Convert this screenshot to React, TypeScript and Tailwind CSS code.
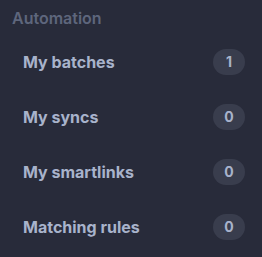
const items = [
  { label: "My batches", count: 1 },
  { label: "My syncs", count: 0 },
  { label: "My smartlinks", count: 0 },
  { label: "Matching rules", count: 0 },
];

export default function App() {
  return (
    <div className="h-[257px] w-[262px] bg-[#282b3a] font-['Inter',sans-serif]">
      <div className="px-3 pt-[8px] pb-[6px] text-[16px] font-semibold leading-5 text-[#5e667c]">Automation</div>
      <ul>
        {items.map((item) => (
          <li key={item.label} className="flex h-[55px] items-center justify-between pl-[23px] pr-[17px]">
            <span className="text-[16px] font-bold text-[#a8b3cb]">{item.label}</span>
            <span className="flex h-[26px] w-[32px] items-center justify-center rounded-full bg-[#393d4d] text-[14px] font-bold text-[#a8b3cb]">
              {item.count}
            </span>
          </li>
        ))}
      </ul>
    </div>
  );
}
